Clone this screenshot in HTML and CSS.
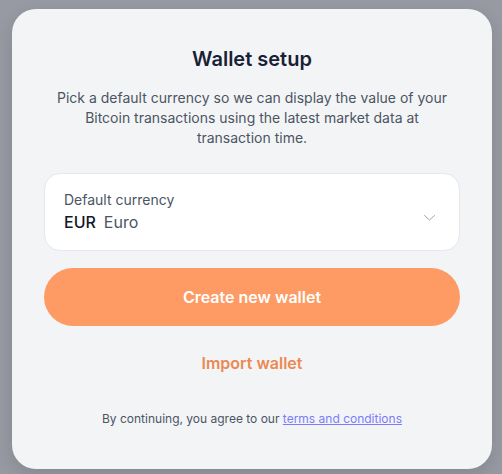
FILE: index.html
```html
<!DOCTYPE html>
<html lang="en">
<head>
<meta charset="utf-8">
<title>Wallet setup</title>
<link rel="stylesheet" href="styles.css">
</head>
<body>
<div class="backdrop">
  <div class="card">
    <h1 class="title">Wallet setup</h1>
    <p class="intro">Pick a default currency so we can display the value of your Bitcoin transactions using the latest market data at transaction time.</p>
    <div class="select">
      <div class="select-text">
        <div class="select-label">Default currency</div>
        <div class="select-value"><span class="code">EUR</span><span class="name">Euro</span></div>
      </div>
      <svg class="chevron" width="11" height="6" viewBox="0 0 11 6" aria-hidden="true">
        <path d="M0.5 0.5 L5.5 5 L10.5 0.5" fill="none" stroke="#9ca3af" stroke-width="1" stroke-linecap="round" stroke-linejoin="round"/>
      </svg>
    </div>
    <button class="primary">Create new wallet</button>
    <a class="secondary" href="#">Import wallet</a>
    <p class="terms">By continuing, you agree to our <a href="#" class="terms-link">terms and conditions</a></p>
  </div>
</div>
</body>
</html>
```
FILE: styles.css
```css
* { box-sizing: border-box; }
html, body { margin: 0; padding: 0; }
body {
  background: #979aa2;
  font-family: Inter, "Noto Sans", "Liberation Sans", sans-serif;
  width: 502px;
  height: 474px;
  overflow: hidden;
}
.backdrop {
  padding: 9px 10px 0 12px;
}
.card {
  width: 480px;
  height: 460px;
  background: #f3f4f6;
  border-radius: 24px;
  box-shadow: 0 6px 18px rgba(0, 0, 0, 0.12);
  padding: 36px 32px 0 32px;
  display: flex;
  flex-direction: column;
  align-items: stretch;
}
.title {
  margin: 0;
  font-size: 20px;
  line-height: 28px;
  font-weight: 600;
  color: #1a1f36;
  text-align: center;
}
.intro {
  margin: 15px 0 0;
  font-size: 14px;
  line-height: 20px;
  color: #4b5563;
  text-align: center;
  padding: 0 8px;
}
.select {
  margin-top: 25px;
  height: 78px;
  background: #ffffff;
  border: 1px solid #e5e7eb;
  border-radius: 16px;
  padding: 16px 24px 0 19px;
  display: flex;
  justify-content: space-between;
  align-items: flex-start;
}
.select-label {
  font-size: 14px;
  line-height: 20px;
  color: #4b5563;
}
.select-value {
  font-size: 16px;
  line-height: 24px;
  display: flex;
  gap: 8px;
}
.code {
  color: #111827;
  font-weight: 500;
}
.name {
  color: #4b5563;
}
.chevron {
  margin-top: 25px;
}
.primary {
  margin-top: 17px;
  height: 58px;
  border: none;
  border-radius: 29px;
  background: #fe9a63;
  color: #ffffff;
  font-family: inherit;
  font-size: 16px;
  font-weight: 600;
  cursor: pointer;
}
.secondary {
  margin-top: 25px;
  display: block;
  text-align: center;
  font-size: 16px;
  line-height: 24px;
  font-weight: 600;
  color: #ea8a52;
  text-decoration: none;
}
.terms {
  margin: 36px 0 0;
  text-align: center;
  font-size: 12px;
  line-height: 16px;
  color: #4b5563;
}
.terms-link {
  color: #7c7cfa;
  text-decoration: underline;
}
```
